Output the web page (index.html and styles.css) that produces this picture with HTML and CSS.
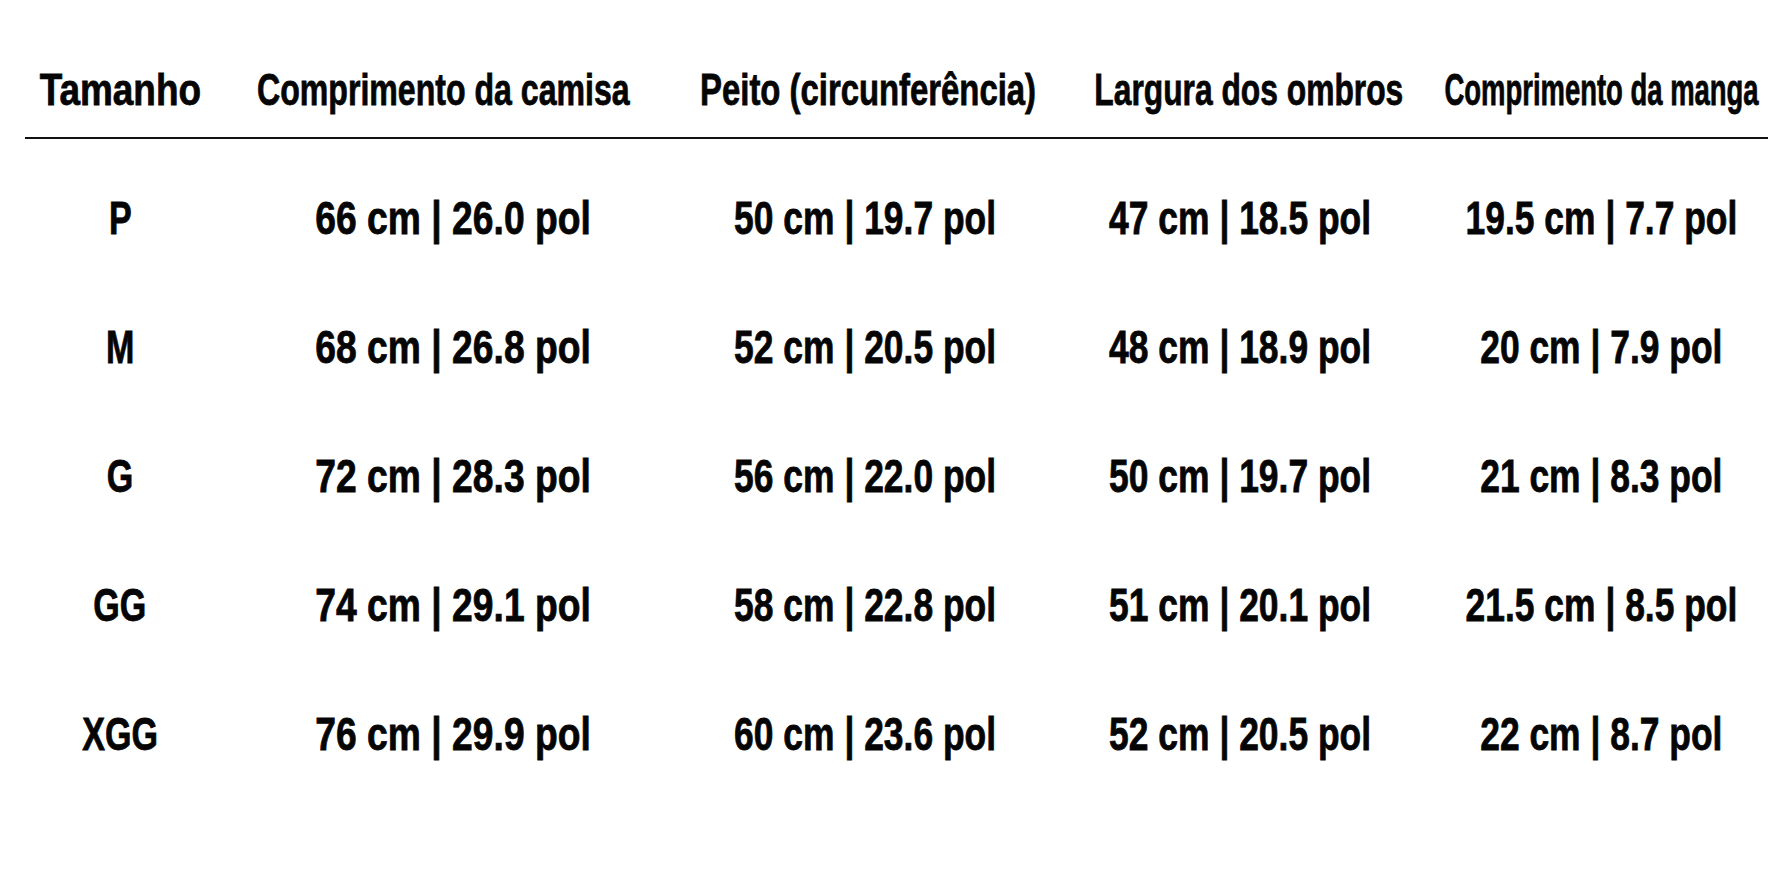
FILE: index.html
```html
<!DOCTYPE html>
<html lang="pt-BR">
<head>
<meta charset="utf-8">
<title>Tabela de medidas</title>
<link rel="stylesheet" href="styles.css">
</head>
<body>
<main class="chart">
  <div class="row head">
    <div class="cell"><span class="txt sx-tam">Tamanho</span></div>
    <div class="cell shift-l"><span class="txt sx-cam">Comprimento da camisa</span></div>
    <div class="cell shift-r"><span class="txt sx-pei">Peito (circunferência)</span></div>
    <div class="cell shift-rr"><span class="txt sx-lar">Largura dos ombros</span></div>
    <div class="cell"><span class="txt sx-man">Comprimento da manga</span></div>
  </div>
  <div class="rows">
    <div class="row">
      <div class="cell"><span class="txt size">P</span></div>
      <div class="cell c1"><span class="txt data">66 cm | 26.0 pol</span></div>
      <div class="cell"><span class="txt data">50 cm | 19.7 pol</span></div>
      <div class="cell"><span class="txt data">47 cm | 18.5 pol</span></div>
      <div class="cell"><span class="txt data">19.5 cm | 7.7 pol</span></div>
    </div>
    <div class="row">
      <div class="cell"><span class="txt size">M</span></div>
      <div class="cell c1"><span class="txt data">68 cm | 26.8 pol</span></div>
      <div class="cell"><span class="txt data">52 cm | 20.5 pol</span></div>
      <div class="cell"><span class="txt data">48 cm | 18.9 pol</span></div>
      <div class="cell"><span class="txt data">20 cm | 7.9 pol</span></div>
    </div>
    <div class="row">
      <div class="cell"><span class="txt size">G</span></div>
      <div class="cell c1"><span class="txt data">72 cm | 28.3 pol</span></div>
      <div class="cell"><span class="txt data">56 cm | 22.0 pol</span></div>
      <div class="cell"><span class="txt data">50 cm | 19.7 pol</span></div>
      <div class="cell"><span class="txt data">21 cm | 8.3 pol</span></div>
    </div>
    <div class="row">
      <div class="cell"><span class="txt size">GG</span></div>
      <div class="cell c1"><span class="txt data">74 cm | 29.1 pol</span></div>
      <div class="cell"><span class="txt data">58 cm | 22.8 pol</span></div>
      <div class="cell"><span class="txt data">51 cm | 20.1 pol</span></div>
      <div class="cell"><span class="txt data">21.5 cm | 8.5 pol</span></div>
    </div>
    <div class="row">
      <div class="cell"><span class="txt size">XGG</span></div>
      <div class="cell c1"><span class="txt data">76 cm | 29.9 pol</span></div>
      <div class="cell"><span class="txt data">60 cm | 23.6 pol</span></div>
      <div class="cell"><span class="txt data">52 cm | 20.5 pol</span></div>
      <div class="cell"><span class="txt data">22 cm | 8.7 pol</span></div>
    </div>
  </div>
</main>
</body>
</html>
```

FILE: styles.css
```css
html, body {
  margin: 0;
  padding: 0;
  background: #ffffff;
  overflow: hidden;
}

body {
  color: #050505;
  font-family: "Liberation Sans", Arial, sans-serif;
  font-weight: 700;
}

.chart {
  margin-left: 25px;
  width: 1743px;
  overflow: hidden;
}

.row {
  display: grid;
  grid-template-columns: 190px 470px 360px 390px 333px;
}

.head {
  padding-top: 67px;
  padding-bottom: 25px;
  border-bottom: 2px solid #111111;
  margin-bottom: 15px;
  font-size: 45px;
  line-height: 45px;
}

.rows .row {
  font-size: 46px;
  line-height: 129px;
}

.cell {
  display: flex;
  justify-content: center;
  white-space: nowrap;
  min-width: 0;
}

.txt {
  display: block;
  flex: none;
  -webkit-text-stroke: 0.8px #050505;
  transform: scaleX(var(--sx, 1));
  transform-origin: center;
}

.size { --sx: 0.74; }
.data { --sx: 0.77; }

.c1 { padding-left: 6px; }
.c1 .data { --sx: 0.81; }

.sx-tam { --sx: 0.82; }
.sx-cam { --sx: 0.713; }
.sx-pei { --sx: 0.73; }
.sx-lar { --sx: 0.706; }
.sx-man { --sx: 0.61; }

.shift-l { padding-right: 14px; }
.shift-r { padding-left: 6px; }
.shift-rr { padding-left: 18px; }
```
